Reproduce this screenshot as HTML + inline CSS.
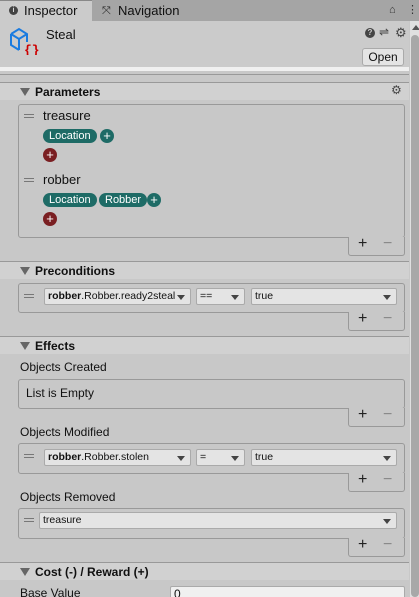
<!DOCTYPE html>
<html><head><style>
*{margin:0;padding:0;box-sizing:border-box}
html,body{width:419px;height:597px;overflow:hidden}
body{background:#c8c8c8;font-family:"Liberation Sans",sans-serif;font-size:12px;color:#101010;position:relative}
.a{position:absolute}
.hdr{position:absolute;left:0;width:409px;height:18px;background:#d1d1d1;border-top:1px solid #999;font-weight:bold;font-size:12px}
.hdr span{position:absolute;left:35px;top:2px}
.hdr i{position:absolute;left:20px;top:5px;width:0;height:0;border-left:5px solid transparent;border-right:5px solid transparent;border-top:8px solid #666}
.box{position:absolute;left:18px;width:387px;border:1px solid #999;border-radius:3px;background:#c8c8c8}
.foot{position:absolute;left:348px;width:57px;height:19px;border:1px solid #999;border-top:none;border-radius:0 0 3px 3px;background:#c8c8c8;font-size:16px}
.foot b{position:absolute;left:9px;top:-2px;font-weight:normal;color:#222}
.foot em{position:absolute;left:34px;top:-2px;font-style:normal;color:#888}
.pill{position:absolute;height:14px;border-radius:7px;background:#1e6b66;color:#fff;font-size:11px;line-height:14px;padding:0 6px}
.pc{position:absolute;width:14px;height:14px;border-radius:7px;background:#1e6b66;color:#fff;font-size:13px;line-height:13px;text-align:center}
.rc{background:#7a1f22}
.dd{position:absolute;height:17px;background:#e4e4e4;border:1px solid #aaa;border-radius:2px;font-size:10.5px;line-height:15px;padding-left:3px;overflow:hidden;white-space:nowrap}
.dd:after{content:"";position:absolute;right:5px;top:6px;border-left:4px solid transparent;border-right:4px solid transparent;border-top:5px solid #444;box-shadow:0 0 0 6px #e4e4e4 inset}
.hand{position:absolute;left:24px;width:10px;height:4px;border-top:1px solid #777;border-bottom:1px solid #777}
.lbl{position:absolute;left:20px;font-size:12px}
</style></head><body>
<div class="a" style="left:0;top:0;width:419px;height:21px;background:#a5a5a5"></div>
<div class="a" style="left:0;top:0;width:92px;height:21px;background:#cbcbcb;border-top:1px solid #888"></div>
<div class="a" style="left:9px;top:6px;width:9px;height:9px;border-radius:5px;background:#444;color:#ddd;font-size:7px;text-align:center;line-height:9px;font-weight:bold">i</div>
<div class="a" style="left:24px;top:3px;font-size:13px">Inspector</div>
<div class="a" style="left:102px;top:5px;font-size:11px;color:#222">⤧</div>
<div class="a" style="left:118px;top:3px;font-size:13px">Navigation</div>
<div class="a" style="left:389px;top:4px;font-size:11px;color:#333">⌂</div>
<div class="a" style="left:407px;top:3px;font-size:11px;color:#333">⋮</div>
<div class="a" style="left:0;top:21px;width:409px;height:47px;background:#cbcbcb"></div>
<svg class="a" style="left:9px;top:27px" width="32" height="28" viewBox="0 0 32 28"><path d="M2 7 L10 2 L18 7 L18 15 M2 7 L2 18 L10 23 M2 7 L10 12 L18 7 M10 12 L10 23" fill="none" stroke="#1a7be0" stroke-width="2"/><text x="15" y="27" font-family="Liberation Mono" font-weight="bold" font-size="13" fill="#c00">{}</text></svg>
<div class="a" style="left:46px;top:27px;font-size:13px">Steal</div>
<div class="a" style="left:365px;top:28px;width:10px;height:10px;border-radius:5px;background:#444;color:#ccc;font-size:8px;text-align:center;line-height:10px;font-weight:bold">?</div>
<div class="a" style="left:379px;top:25px;font-size:12px;color:#444">⇌</div>
<div class="a" style="left:395px;top:25px;font-size:13px;color:#444">⚙</div>
<div class="a" style="left:362px;top:48px;width:42px;height:18px;background:#e4e4e4;border:1px solid #aaa;border-radius:3px;font-size:12px;text-align:center;line-height:16px">Open</div>
<div class="a" style="left:0;top:67px;width:409px;height:4px;background:#f0f0f0"></div>
<div class="a" style="left:0;top:74px;width:409px;height:1px;background:#999"></div>
<div class="a" style="left:410px;top:21px;width:9px;height:576px;background:#e0e0e0"></div>
<div class="a" style="left:411px;top:35px;width:8px;height:562px;background:#a8a8a8;border-radius:4px"></div>
<div class="a" style="left:412px;top:25px;border-left:4px solid transparent;border-right:4px solid transparent;border-bottom:5px solid #555"></div>

<div class="hdr" style="top:82px"><i></i><span>Parameters</span></div>
<div class="a" style="left:391px;top:83px;font-size:12px;color:#444">⚙</div>
<div class="box" style="top:104px;height:134px"></div>
<div class="hand" style="top:114px"></div>
<div class="a" style="left:43px;top:108px;font-size:13px">treasure</div>
<div class="pill" style="left:43px;top:129px">Location</div>
<div class="pc" style="left:100px;top:129px">+</div>
<div class="pc rc" style="left:43px;top:148px">+</div>
<div class="hand" style="top:178px"></div>
<div class="a" style="left:43px;top:172px;font-size:13px">robber</div>
<div class="pill" style="left:43px;top:193px">Location</div>
<div class="pill" style="left:99px;top:193px">Robber</div>
<div class="pc" style="left:147px;top:193px">+</div>
<div class="pc rc" style="left:43px;top:212px">+</div>
<div class="foot" style="top:237px"><b>+</b><em>−</em></div>

<div class="hdr" style="top:261px"><i></i><span>Preconditions</span></div>
<div class="box" style="top:283px;height:30px"></div>
<div class="hand" style="top:294px"></div>
<div class="dd" style="left:44px;top:288px;width:147px;padding-right:14px"><b>robber</b>.Robber.ready2steal</div>
<div class="dd" style="left:196px;top:288px;width:49px">==</div>
<div class="dd" style="left:251px;top:288px;width:146px">true</div>
<div class="foot" style="top:312px"><b>+</b><em>−</em></div>

<div class="hdr" style="top:336px"><i></i><span>Effects</span></div>
<div class="lbl" style="top:360px">Objects Created</div>
<div class="box" style="top:379px;height:30px"></div>
<div class="a" style="left:26px;top:386px;font-size:12px">List is Empty</div>
<div class="foot" style="top:408px"><b>+</b><em>−</em></div>
<div class="lbl" style="top:425px">Objects Modified</div>
<div class="box" style="top:443px;height:31px"></div>
<div class="hand" style="top:454px"></div>
<div class="dd" style="left:44px;top:449px;width:147px"><b>robber</b>.Robber.stolen</div>
<div class="dd" style="left:196px;top:449px;width:49px">=</div>
<div class="dd" style="left:251px;top:449px;width:146px">true</div>
<div class="foot" style="top:473px"><b>+</b><em>−</em></div>
<div class="lbl" style="top:490px">Objects Removed</div>
<div class="box" style="top:508px;height:31px"></div>
<div class="hand" style="top:518px"></div>
<div class="dd" style="left:39px;top:512px;width:358px">treasure</div>
<div class="foot" style="top:538px"><b>+</b><em>−</em></div>

<div class="hdr" style="top:562px"><i></i><span>Cost (-) / Reward (+)</span></div>
<div class="lbl" style="top:586px">Base Value</div>
<div class="a" style="left:170px;top:586px;width:235px;height:18px;background:#f0f0f0;border:1px solid #aaa;border-radius:2px;padding-left:3px;font-size:12px">0</div>
</body></html>
